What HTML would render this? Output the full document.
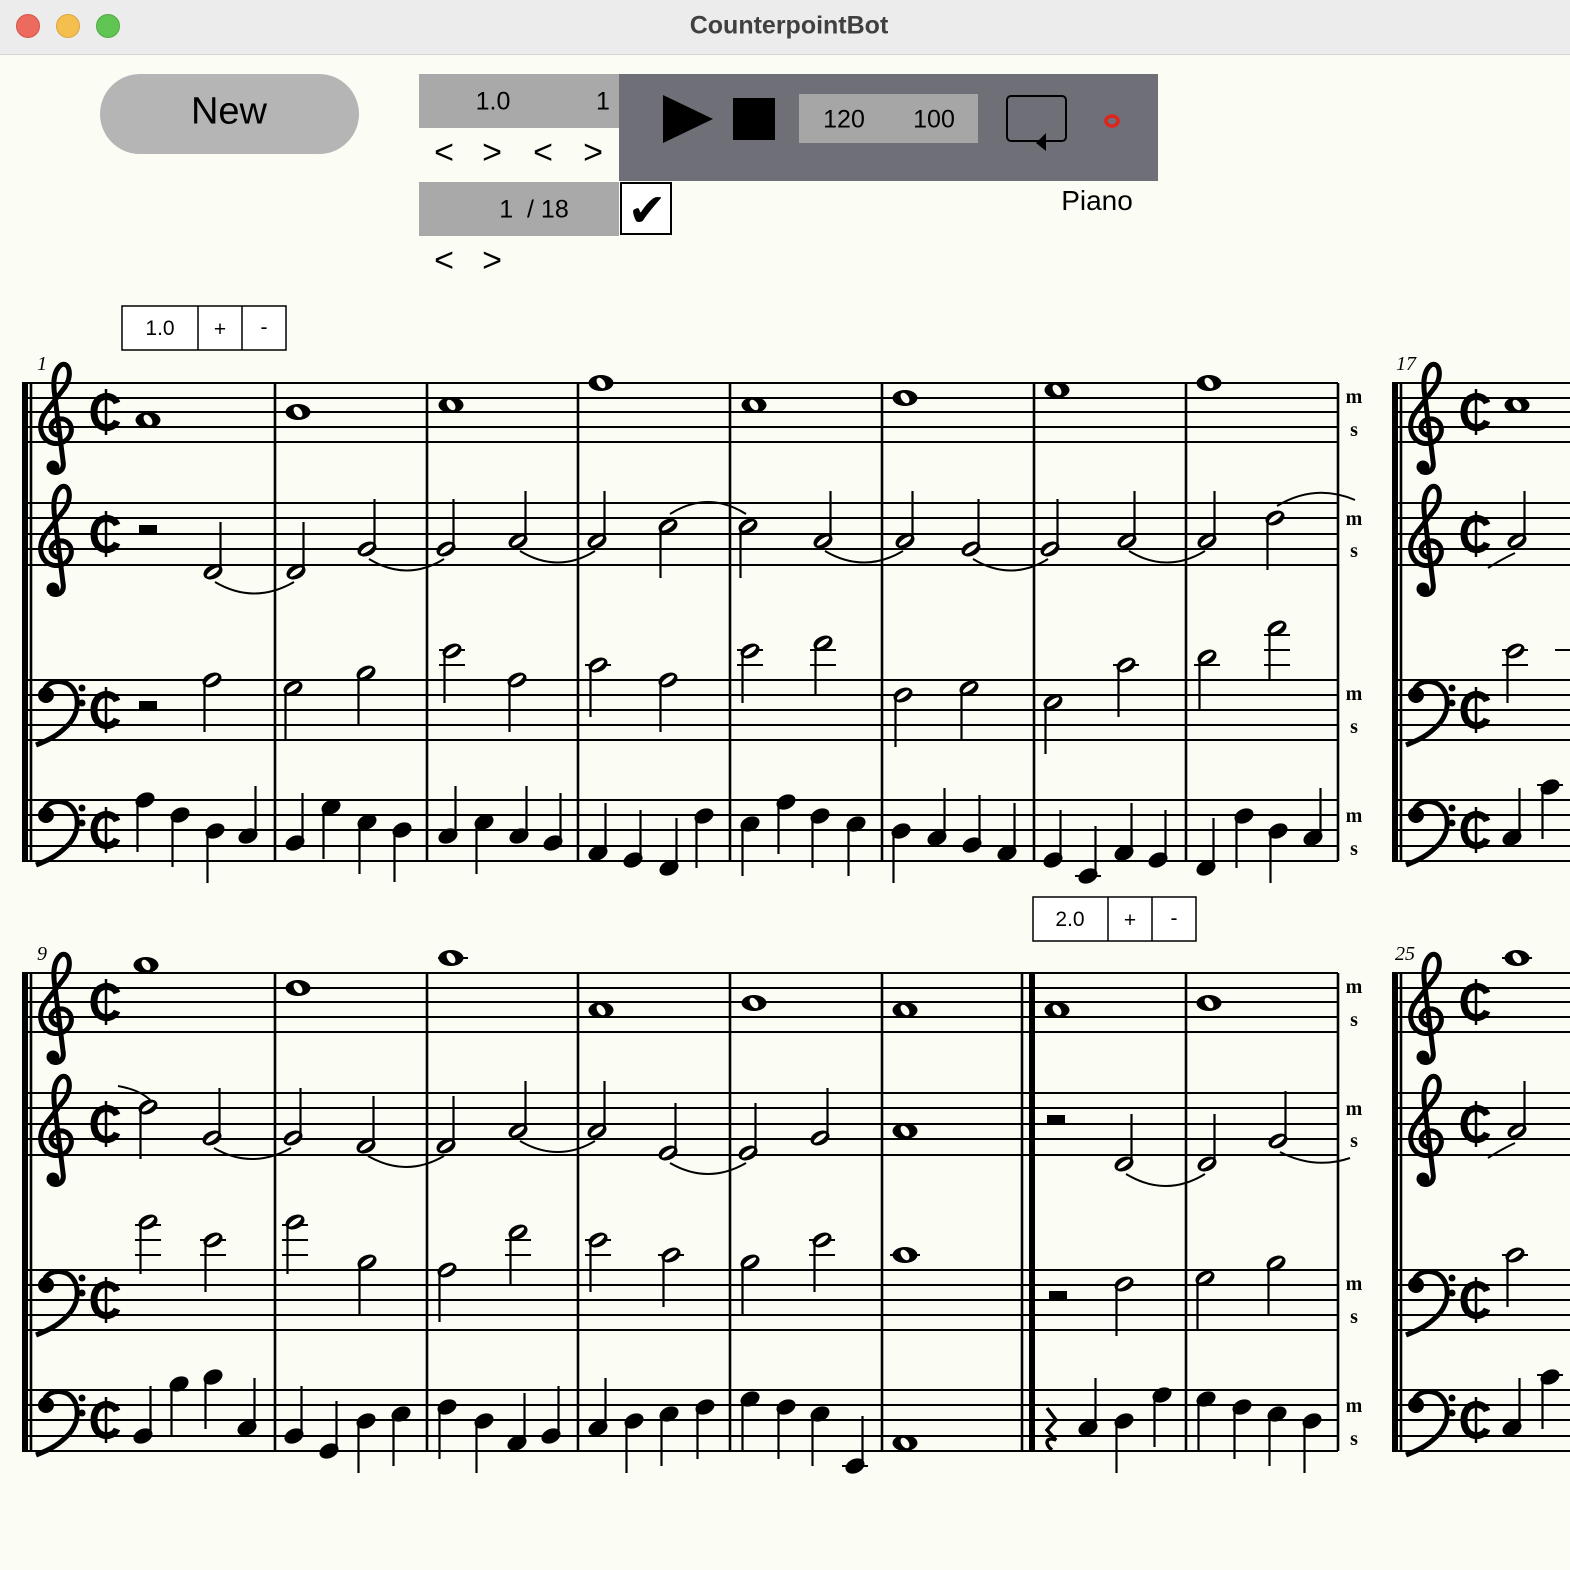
<!DOCTYPE html>
<html><head><meta charset="utf-8"><style>
body{margin:0;width:1570px;height:1570px;background:#fbfcf4;position:relative;overflow:hidden;font-family:"Liberation Sans",sans-serif}
.a{position:absolute}
.t{position:absolute;transform:translate(-50%,-50%);white-space:nowrap}
</style></head><body>
<div class="a" style="left:0;top:0;width:1570px;height:54px;background:#ececec;border-bottom:1px solid #d6d6d6"></div>
<div class="a" style="left:16px;top:14px;width:24px;height:24px;border-radius:50%;background:#ed6a5e;border:1px solid #d45447;box-sizing:border-box"></div>
<div class="a" style="left:56px;top:14px;width:24px;height:24px;border-radius:50%;background:#f5bf4f;border:1px solid #d9a53c;box-sizing:border-box"></div>
<div class="a" style="left:96px;top:14px;width:24px;height:24px;border-radius:50%;background:#61c554;border:1px solid #4ea942;box-sizing:border-box"></div>
<div class="t" style="left:789px;top:26px;font-size:25px;font-weight:bold;color:#404040">CounterpointBot</div>

<div class="a" style="left:100px;top:74px;width:259px;height:80px;border-radius:40px;background:#b5b5b5"></div>
<div class="t" style="left:229px;top:112px;font-size:38px">New</div>

<div class="a" style="left:419px;top:74px;width:200px;height:54px;background:#a9a9a9"></div>
<div class="t" style="left:493px;top:102px;font-size:25px">1.0</div>
<div class="t" style="left:603px;top:102px;font-size:25px">1</div>
<div class="t" style="left:444px;top:153px;font-size:34px">&lt;</div>
<div class="t" style="left:492px;top:153px;font-size:34px">&gt;</div>
<div class="t" style="left:543px;top:153px;font-size:34px">&lt;</div>
<div class="t" style="left:593px;top:153px;font-size:34px">&gt;</div>
<div class="a" style="left:619px;top:74px;width:539px;height:107px;background:#6f6f78"></div>
<div class="a" style="left:419px;top:182px;width:200px;height:54px;background:#a9a9a9"></div>
<div class="t" style="left:534px;top:210px;font-size:25px">1 &nbsp;/ 18</div>
<div class="t" style="left:444px;top:261px;font-size:34px">&lt;</div>
<div class="t" style="left:492px;top:261px;font-size:34px">&gt;</div>
<div class="a" style="left:620px;top:182px;width:52px;height:53px;border:2px solid #000;background:#fff;box-sizing:border-box"></div>
<div class="t" style="left:647px;top:210px;font-size:46px;font-family:'DejaVu Sans',sans-serif">✔</div>
<div class="a" style="left:799px;top:94px;width:179px;height:49px;background:#a6a6a6"></div>
<div class="t" style="left:844px;top:120px;font-size:25px">120</div>
<div class="t" style="left:934px;top:120px;font-size:25px">100</div>
<div class="t" style="left:1097px;top:201px;font-size:28px">Piano</div>
<svg class="a" style="left:0;top:0" width="1570" height="1570">
<polygon points="663,95 713,119 663,143"/>
<rect x="733" y="98" width="42" height="42"/>
<rect x="1007" y="96" width="59" height="45" rx="4" fill="none" stroke="#000" stroke-width="2"/>
<polygon points="1036,143 1046,133 1046,151" fill="#000"/>
<ellipse cx="1112" cy="121" rx="6" ry="5" fill="none" stroke="#e0231c" stroke-width="3.5"/>
<g fill="#fff" stroke="#000" stroke-width="1.5">
<rect x="122" y="306" width="164" height="44"/><path d="M198,306V350M242,306V350"/>
<rect x="1033" y="897" width="163" height="44"/><path d="M1108,897V941M1152,897V941"/>
</g>
<g font-family="Liberation Sans" font-size="21" text-anchor="middle">
<text x="160" y="335">1.0</text><text x="220" y="336">+</text><text x="264" y="334">-</text>
<text x="1070" y="926">2.0</text><text x="1130" y="927">+</text><text x="1174" y="925">-</text>
</g>
<defs>
<g id="q"><ellipse rx="10" ry="7" transform="rotate(-25)"/></g>
<g id="h"><ellipse rx="10" ry="6.8" transform="rotate(-25)"/><ellipse rx="7.2" ry="2.4" transform="rotate(-35)" fill="#fbfcf4"/></g>
<g id="w"><ellipse rx="12.5" ry="8"/><ellipse rx="3.6" ry="5.8" transform="rotate(-35)" fill="#fbfcf4"/></g>
<g id="tc" fill="none" stroke="#000"><path stroke-width="5" d="M4,8 C-8,10 -10,-6 2,-8 C16,-10 20,10 4,16 C-14,20 -22,0 -12,-14 L8,-40 C16,-52 12,-66 4,-62 C-4,-56 -4,-42 -2,-30 L6,34 C8,44 0,48 -6,44"/><circle cx="-4" cy="40" r="6.5" fill="#000" stroke="none"/></g>
<g id="bc"><path fill="none" stroke="#000" stroke-width="5" d="M-12,2 C-14,-12 0,-16 10,-12 C24,-6 26,18 10,32 C0,42 -10,46 -20,50"/><circle cx="-10" cy="0" r="8"/><circle cx="26" cy="-7" r="3.5"/><circle cx="26" cy="8" r="3.5"/></g>
<g id="ct" fill="none" stroke="#000"><path stroke-width="7" d="M11,-9 C7,-19 -12,-19 -12,0 C-12,19 7,19 11,9"/><path stroke-width="2.5" d="M0,-23V23"/></g>
</defs>
<g stroke="#000" stroke-width="2" fill="none">
<path d="M27,383H1338M27,398H1338M27,412H1338M27,427H1338M27,442H1338M27,503H1338M27,518H1338M27,534H1338M27,549H1338M27,565H1338M27,680H1338M27,695H1338M27,710H1338M27,725H1338M27,740H1338M27,800H1338M27,815H1338M27,830H1338M27,846H1338M27,861H1338"/>
<path d="M27,973H1338M27,988H1338M27,1002H1338M27,1017H1338M27,1032H1338M27,1093H1338M27,1108H1338M27,1124H1338M27,1139H1338M27,1155H1338M27,1270H1338M27,1285H1338M27,1300H1338M27,1315H1338M27,1330H1338M27,1390H1338M27,1405H1338M27,1420H1338M27,1436H1338M27,1451H1338"/>
<path d="M1396,383H1570M1396,398H1570M1396,412H1570M1396,427H1570M1396,442H1570M1396,503H1570M1396,518H1570M1396,534H1570M1396,549H1570M1396,565H1570M1396,680H1570M1396,695H1570M1396,710H1570M1396,725H1570M1396,740H1570M1396,800H1570M1396,815H1570M1396,830H1570M1396,846H1570M1396,861H1570"/>
<path d="M1396,973H1570M1396,988H1570M1396,1002H1570M1396,1017H1570M1396,1032H1570M1396,1093H1570M1396,1108H1570M1396,1124H1570M1396,1139H1570M1396,1155H1570M1396,1270H1570M1396,1285H1570M1396,1300H1570M1396,1315H1570M1396,1330H1570M1396,1390H1570M1396,1405H1570M1396,1420H1570M1396,1436H1570M1396,1451H1570"/>
<path stroke-width="2.6" d="M275,383V861M427,383V861M578,383V861M730,383V861M882,383V861M1034,383V861M1186,383V861M1338,383V861M275,973V1451M427,973V1451M578,973V1451M730,973V1451M882,973V1451M1022,973V1451M1186,973V1451M1338,973V1451M31,383V861M31,973V1451M1401,383V861M1401,973V1451"/>
<path stroke-width="6" d="M25,382V862M25,972V1452M1395,382V862M1395,972V1452M1032,973V1451"/>
</g>
<g font-family="Liberation Serif" font-style="italic" font-size="20">
<text x="37" y="370">1</text><text x="1396" y="370">17</text><text x="37" y="960">9</text><text x="1395" y="960">25</text>
</g>
<g font-family="Liberation Serif" font-weight="bold" font-size="20" text-anchor="middle">
<text x="1354" y="403">m</text><text x="1354" y="436">s</text><text x="1354" y="525">m</text><text x="1354" y="557">s</text><text x="1354" y="700">m</text><text x="1354" y="733">s</text><text x="1354" y="822">m</text><text x="1354" y="855">s</text>
<text x="1354" y="993">m</text><text x="1354" y="1026">s</text><text x="1354" y="1115">m</text><text x="1354" y="1147">s</text><text x="1354" y="1290">m</text><text x="1354" y="1323">s</text><text x="1354" y="1412">m</text><text x="1354" y="1445">s</text>
</g>
<!-- clefs -->
<use href="#tc" x="57" y="427"/><use href="#tc" x="57" y="549"/><use href="#bc" x="56" y="695"/><use href="#bc" x="56" y="815"/>
<use href="#tc" x="57" y="1017"/><use href="#tc" x="57" y="1139"/><use href="#bc" x="56" y="1285"/><use href="#bc" x="56" y="1405"/>
<use href="#tc" x="1427" y="427"/><use href="#tc" x="1427" y="549"/><use href="#bc" x="1426" y="695"/><use href="#bc" x="1426" y="815"/>
<use href="#tc" x="1427" y="1017"/><use href="#tc" x="1427" y="1139"/><use href="#bc" x="1426" y="1285"/><use href="#bc" x="1426" y="1405"/>
<use href="#ct" x="106" y="412"/><use href="#ct" x="106" y="534"/><use href="#ct" x="106" y="710"/><use href="#ct" x="106" y="830"/>
<use href="#ct" x="106" y="1002"/><use href="#ct" x="106" y="1124"/><use href="#ct" x="106" y="1300"/><use href="#ct" x="106" y="1420"/>
<use href="#ct" x="1476" y="412"/><use href="#ct" x="1476" y="534"/><use href="#ct" x="1476" y="710"/><use href="#ct" x="1476" y="830"/>
<use href="#ct" x="1476" y="1002"/><use href="#ct" x="1476" y="1124"/><use href="#ct" x="1476" y="1300"/><use href="#ct" x="1476" y="1420"/>
<!-- rests -->
<rect x="139" y="525" width="18" height="9"/><rect x="139" y="701" width="18" height="9"/>
<rect x="1047" y="1115" width="18" height="9"/><rect x="1049" y="1291" width="18" height="9"/>
<path d="M1047,1408 L1056,1420 L1047,1430 L1056,1440 C1046,1436 1044,1444 1052,1450" fill="none" stroke="#000" stroke-width="3.5"/>
<!-- ledgers -->
<path stroke="#000" stroke-width="2" d="M439,665h26M439,650h26M585,665h26M737,665h26M737,650h26M810,665h26M810,650h26M1113,665h26M1194,665h26M1264,665h26M1264,650h26M1264,635h26M1075,876h26M1502,665h26M1502,650h26M1555,650h15M1537,785h26
M135,1255h26M135,1240h26M135,1225h26M200,1255h26M200,1240h26M282,1255h26M282,1240h26M282,1225h26M505,1255h26M505,1240h26M585,1255h26M585,1240h26M658,1255h26M809,1255h26M809,1240h26M890,1255h30M438,958h30M842,1466h26M1502,958h30M1502,1255h26M1537,1375h26"/>
<!-- wholes -->
<use href="#w" x="148" y="420"/><use href="#w" x="298" y="412"/><use href="#w" x="451" y="405"/><use href="#w" x="601" y="383"/><use href="#w" x="754" y="405"/><use href="#w" x="905" y="398"/><use href="#w" x="1057" y="390"/><use href="#w" x="1209" y="383"/><use href="#w" x="1517" y="405"/>
<use href="#w" x="146" y="965"/><use href="#w" x="298" y="988"/><use href="#w" x="451" y="958"/><use href="#w" x="601" y="1010"/><use href="#w" x="754" y="1003"/><use href="#w" x="905" y="1010"/><use href="#w" x="1057" y="1010"/><use href="#w" x="1209" y="1003"/><use href="#w" x="1517" y="958"/>
<use href="#w" x="905" y="1131"/><use href="#w" x="905" y="1255"/><use href="#w" x="905" y="1443"/>
<!-- halves -->
<use href="#h" x="213" y="572"/><use href="#h" x="296" y="572"/><use href="#h" x="367" y="549"/><use href="#h" x="446" y="549"/><use href="#h" x="518" y="541"/><use href="#h" x="597" y="541"/><use href="#h" x="668" y="526"/><use href="#h" x="748" y="526"/><use href="#h" x="823" y="541"/><use href="#h" x="905" y="541"/><use href="#h" x="971" y="549"/><use href="#h" x="1050" y="549"/><use href="#h" x="1127" y="541"/><use href="#h" x="1207" y="541"/><use href="#h" x="1275" y="518"/><use href="#h" x="1517" y="541"/>
<use href="#h" x="212" y="680"/><use href="#h" x="293" y="688"/><use href="#h" x="366" y="673"/><use href="#h" x="452" y="651"/><use href="#h" x="517" y="680"/><use href="#h" x="598" y="665"/><use href="#h" x="668" y="680"/><use href="#h" x="750" y="651"/><use href="#h" x="823" y="643"/><use href="#h" x="903" y="695"/><use href="#h" x="969" y="688"/><use href="#h" x="1053" y="702"/><use href="#h" x="1126" y="665"/><use href="#h" x="1207" y="657"/><use href="#h" x="1277" y="628"/><use href="#h" x="1515" y="651"/>
<use href="#h" x="148" y="1107"/><use href="#h" x="212" y="1138"/><use href="#h" x="293" y="1138"/><use href="#h" x="366" y="1146"/><use href="#h" x="446" y="1146"/><use href="#h" x="518" y="1131"/><use href="#h" x="597" y="1131"/><use href="#h" x="668" y="1153"/><use href="#h" x="748" y="1153"/><use href="#h" x="820" y="1138"/><use href="#h" x="1124" y="1164"/><use href="#h" x="1207" y="1164"/><use href="#h" x="1278" y="1141"/><use href="#h" x="1517" y="1131"/>
<use href="#h" x="148" y="1222"/><use href="#h" x="213" y="1240"/><use href="#h" x="295" y="1222"/><use href="#h" x="367" y="1262"/><use href="#h" x="447" y="1270"/><use href="#h" x="518" y="1232"/><use href="#h" x="598" y="1240"/><use href="#h" x="671" y="1255"/><use href="#h" x="750" y="1262"/><use href="#h" x="822" y="1240"/><use href="#h" x="1124" y="1284"/><use href="#h" x="1205" y="1278"/><use href="#h" x="1276" y="1263"/><use href="#h" x="1515" y="1255"/>
<!-- quarters -->
<use href="#q" x="145" y="800"/><use href="#q" x="180" y="815"/><use href="#q" x="215" y="831"/><use href="#q" x="248" y="836"/><use href="#q" x="295" y="843"/><use href="#q" x="331" y="807"/><use href="#q" x="367" y="822"/><use href="#q" x="402" y="830"/><use href="#q" x="448" y="836"/><use href="#q" x="484" y="822"/><use href="#q" x="519" y="836"/><use href="#q" x="553" y="843"/>
<use href="#q" x="598" y="853"/><use href="#q" x="633" y="860"/><use href="#q" x="669" y="868"/><use href="#q" x="704" y="816"/><use href="#q" x="750" y="824"/><use href="#q" x="786" y="802"/><use href="#q" x="820" y="816"/><use href="#q" x="856" y="824"/><use href="#q" x="901" y="831"/><use href="#q" x="937" y="838"/><use href="#q" x="972" y="845"/><use href="#q" x="1007" y="853"/><use href="#q" x="1053" y="860"/><use href="#q" x="1088" y="876"/><use href="#q" x="1124" y="853"/><use href="#q" x="1158" y="860"/><use href="#q" x="1206" y="868"/><use href="#q" x="1244" y="816"/><use href="#q" x="1278" y="831"/><use href="#q" x="1313" y="838"/><use href="#q" x="1512" y="838"/><use href="#q" x="1550" y="787"/>
<use href="#q" x="143" y="1436"/><use href="#q" x="179" y="1384"/><use href="#q" x="213" y="1377"/><use href="#q" x="247" y="1428"/><use href="#q" x="294" y="1436"/><use href="#q" x="329" y="1451"/><use href="#q" x="366" y="1421"/><use href="#q" x="401" y="1414"/><use href="#q" x="447" y="1407"/><use href="#q" x="484" y="1421"/><use href="#q" x="517" y="1443"/><use href="#q" x="551" y="1436"/><use href="#q" x="598" y="1428"/><use href="#q" x="634" y="1421"/><use href="#q" x="669" y="1414"/><use href="#q" x="705" y="1407"/><use href="#q" x="750" y="1399"/><use href="#q" x="786" y="1407"/><use href="#q" x="820" y="1414"/><use href="#q" x="855" y="1466"/>
<use href="#q" x="1088" y="1428"/><use href="#q" x="1124" y="1421"/><use href="#q" x="1162" y="1395"/><use href="#q" x="1206" y="1399"/><use href="#q" x="1242" y="1407"/><use href="#q" x="1277" y="1414"/><use href="#q" x="1312" y="1421"/><use href="#q" x="1512" y="1428"/><use href="#q" x="1550" y="1377"/>
<!-- stems -->
<path stroke="#000" stroke-width="2.2" fill="none" transform="translate(0,0)" d="M220.5,570V522M303.5,570V522M374.5,547V499M453.5,547V499M525.5,539V491M604.5,539V491M660.5,528V578M740.5,528V578M830.5,539V491M912.5,539V491M978.5,547V499M1057.5,547V499M1134.5,539V491M1214.5,539V491M1267.5,520V570M1524.5,539V491
M204.5,682V732M285.5,690V740M358.5,675V725M444.5,653V703M509.5,682V732M590.5,667V717M660.5,682V732M742.5,653V703M815.5,645V695M895.5,697V747M961.5,690V740M1045.5,704V754M1118.5,667V717M1199.5,659V709M1269.5,630V680M1507.5,653V703
M137.5,802V852M172.5,817V867M207.5,833V883M255.5,834V786M302.5,841V793M323.5,809V859M359.5,824V874M394.5,832V882M455.5,834V786M476.5,824V874M526.5,834V786M560.5,841V793
M605.5,851V803M640.5,858V810M676.5,866V818M696.5,818V868M742.5,826V876M778.5,804V854M812.5,818V868M848.5,826V876M893.5,833V883M944.5,836V788M979.5,843V795M1014.5,851V803M1060.5,858V810M1095.5,874V826M1131.5,851V803M1165.5,858V810M1213.5,866V818M1236.5,818V868M1270.5,833V883M1320.5,836V788M1519.5,836V788M1542.5,789V839
M140.5,1109V1159M219.5,1136V1088M300.5,1136V1088M373.5,1144V1096M453.5,1144V1096M525.5,1129V1081M604.5,1129V1081M675.5,1151V1103M755.5,1151V1103M827.5,1136V1088M1131.5,1162V1114M1214.5,1162V1114M1285.5,1139V1091M1524.5,1129V1081
M140.5,1224V1274M205.5,1242V1292M287.5,1224V1274M359.5,1264V1314M439.5,1272V1322M510.5,1234V1284M590.5,1242V1292M663.5,1257V1307M742.5,1264V1314M814.5,1242V1292M1116.5,1286V1336M1197.5,1280V1330M1268.5,1265V1315M1507.5,1257V1307
M150.5,1434V1386M171.5,1386V1436M205.5,1379V1429M254.5,1426V1378M301.5,1434V1386M336.5,1449V1401M358.5,1423V1473M393.5,1416V1466M439.5,1409V1459M476.5,1423V1473M524.5,1441V1393M558.5,1434V1386M605.5,1426V1378M626.5,1423V1473M661.5,1416V1466M697.5,1409V1459M742.5,1401V1451M778.5,1409V1459M812.5,1416V1466M862.5,1464V1416
M1095.5,1426V1378M1116.5,1423V1473M1154.5,1397V1447M1198.5,1401V1451M1234.5,1409V1459M1269.5,1416V1466M1304.5,1423V1473M1519.5,1426V1378M1542.5,1379V1429"/>
<!-- ties -->
<path stroke="#000" stroke-width="2" fill="none" d="M215,582 Q254,605 294,582M369,559 Q407,582 444,559M520,551 Q558,574 595,551M670,514 Q708,490 746,514M825,551 Q864,574 903,551M973,559 Q1011,582 1048,559M1129,551 Q1167,574 1205,551M1277,506 Q1315,483 1355,500M1488,568 Q1500,560 1515,553
M214,1148 Q252,1170 291,1148M368,1156 Q406,1178 444,1156M520,1141 Q558,1163 595,1141M670,1163 Q708,1185 746,1163M1126,1174 Q1166,1198 1205,1174M1280,1152 Q1315,1170 1350,1158M118,1086 Q140,1090 150,1100M1488,1158 Q1500,1150 1515,1143"/>
</svg>
</body></html>
